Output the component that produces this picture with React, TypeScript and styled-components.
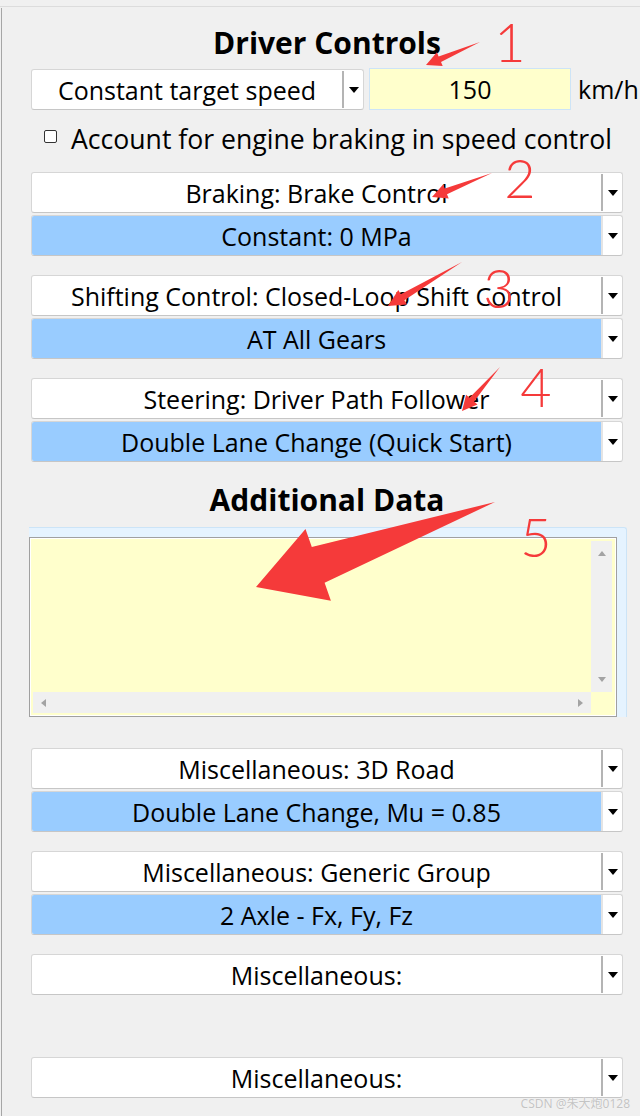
import styled, { createGlobalStyle } from 'styled-components';

const GlobalStyle = createGlobalStyle`
  html, body {
    margin: 0;
    padding: 0;
    background: #f0f0f0;
  }

  body {
    color: #000;
    font-family: "Open Sans", "Noto Sans", sans-serif;
  }
`;

const Page = styled.div`
  box-sizing: border-box;
  height: 1116px;
  overflow: hidden;
  padding-top: 6px;
  position: relative;
  width: 640px;
`;

const Frame = styled.div`
  border-top: 1px solid #dcdcdc;
  height: 100%;
`;

const Panel = styled.div`
  border-left: 1px solid #a6a6a6;
  box-sizing: border-box;
  height: 100%;
  margin: 1px 0 0 1px;
  padding: 18px 17px 0 29px;
`;

const Title = styled.div<{ $gap?: number }>`
  font-size: 30px;
  font-weight: 700;
  height: 34px;
  line-height: 34px;
  margin-top: ${({ $gap }) => $gap ?? 0}px;
  text-align: center;
  white-space: nowrap;
`;

const SpeedRow = styled.div`
  align-items: flex-end;
  display: flex;
  height: 42px;
  margin-top: 8px;
`;

const Combo = styled.div<{ $width?: number; $hidden?: boolean }>`
  background: #fff;
  border: 1px solid #d6d6d6;
  border-bottom-color: #c6c6c6;
  border-radius: 3px;
  box-sizing: border-box;
  display: flex;
  flex: none;
  height: 41px;
  overflow: hidden;
  visibility: ${({ $hidden }) => ($hidden ? 'hidden' : 'visible')};
  width: ${({ $width }) => ($width ? `${$width}px` : '100%')};
`;

const ComboValue = styled.div<{ $selected?: boolean }>`
  align-items: center;
  background: ${({ $selected }) => ($selected ? '#99ccff' : 'transparent')};
  border-right: 2px solid ${({ $selected }) => ($selected ? '#e4e4e4' : '#b4b4b4')};
  display: flex;
  flex: 1;
  font-size: 25px;
  justify-content: center;
  margin: ${({ $selected }) => ($selected ? '0' : '1px 0')};
  padding-top: 1px;
  white-space: nowrap;
`;

const ComboArrow = styled.div`
  align-items: center;
  display: flex;
  flex: none;
  justify-content: center;
  width: 19px;

  &::after {
    border-left: 5px solid transparent;
    border-right: 5px solid transparent;
    border-top: 6px solid #000;
    content: '';
    margin-left: 1px;
  }
`;

const NumberInput = styled.div`
  align-items: center;
  background: #ffffcc;
  border: 1px solid #cde4f7;
  box-sizing: border-box;
  display: flex;
  flex: none;
  font-size: 25px;
  height: 42px;
  justify-content: center;
  margin-left: 5px;
  width: 202px;
`;

const Unit = styled.span`
  align-self: center;
  flex: none;
  font-size: 25px;
  margin-left: 7px;
  white-space: nowrap;
`;

const CheckRow = styled.label`
  align-items: center;
  display: flex;
  font-size: 26.6px;
  height: 30px;
  margin-top: 14px;
  white-space: nowrap;
`;

const CheckBox = styled.span`
  background: #fff;
  border: 1px solid #333;
  border-radius: 2px;
  box-sizing: border-box;
  flex: none;
  height: 13px;
  margin: 0 14px 5px 13px;
  width: 13px;
`;

const GroupList = styled.div<{ $gap: number }>`
  display: flex;
  flex-direction: column;
  gap: 19px;
  margin-top: ${({ $gap }) => $gap}px;
`;

const Group = styled.div`
  display: flex;
  flex-direction: column;
  gap: 2px;
`;

const DataFrame = styled.div`
  background: #e5f3ff;
  border: 1px solid #cce4f7;
  border-bottom: none;
  border-left: none;
  border-radius: 0 3px 0 0;
  box-sizing: border-box;
  height: 190px;
  margin: 10px 0 0 -2px;
  padding: 9px 9px 0 0;
  width: 598px;
`;

const DataBox = styled.div`
  background: #ffffcc;
  border: 1px solid #a0a0a0;
  box-shadow: inset 0 0 0 1px #fff;
  box-sizing: border-box;
  display: grid;
  grid-template-columns: 1fr 21px;
  grid-template-rows: 1fr 21px;
  height: 100%;
  padding: 3px 4px 3px 3px;
`;

const ScrollBar = styled.div<{ $vertical?: boolean }>`
  align-items: center;
  background: #f0f0f0;
  display: flex;
  flex-direction: ${({ $vertical }) => ($vertical ? 'column' : 'row')};
  justify-content: space-between;
  padding: ${({ $vertical }) => ($vertical ? '10px 0' : '0 8px')};
`;

const ScrollArrow = styled.span<{ $dir: 'up' | 'down' | 'left' | 'right' }>`
  height: 0;
  width: 0;
  ${({ $dir }) => {
    const color = '#a3a3a3';
    if ($dir === 'up') return `border-left: 4px solid transparent; border-right: 4px solid transparent; border-bottom: 5px solid ${color};`;
    if ($dir === 'down') return `border-left: 4px solid transparent; border-right: 4px solid transparent; border-top: 5px solid ${color};`;
    if ($dir === 'left') return `border-top: 4px solid transparent; border-bottom: 4px solid transparent; border-right: 5px solid ${color};`;
    return `border-top: 4px solid transparent; border-bottom: 4px solid transparent; border-left: 5px solid ${color};`;
  }}
`;

const Annotations = styled.svg`
  height: 1116px;
  left: 0;
  pointer-events: none;
  position: absolute;
  top: 0;
  width: 640px;

  polygon {
    fill: #f53a3a;
  }

  text {
    fill: #f53a3a;
    font-family: Lato, "Noto Sans", sans-serif;
    font-size: 54px;
    font-weight: 300;
  }
`;

const Watermark = styled.span`
  bottom: 4px;
  color: #c4c4c4;
  font-family: "Noto Sans", "Noto Sans CJK SC", sans-serif;
  font-size: 12px;
  position: absolute;
  right: 10px;
  text-shadow: 0 0 1px #fff;
`;

type Pt = [number, number];

// tapered annotation arrow: pointed tail, straight-based triangular head
const arrowPoints = (tail: Pt, tip: Pt, headLen: number, headHalf: number, shaftHalf: number) => {
  const len = Math.hypot(tip[0] - tail[0], tip[1] - tail[1]);
  const ux = (tip[0] - tail[0]) / len;
  const uy = (tip[1] - tail[1]) / len;
  const nx = -uy;
  const ny = ux;
  const base: Pt = [tip[0] - ux * headLen, tip[1] - uy * headLen];
  const pts: Pt[] = [
    tail,
    [base[0] + nx * shaftHalf, base[1] + ny * shaftHalf],
    [base[0] + nx * headHalf, base[1] + ny * headHalf],
    tip,
    [base[0] - nx * headHalf, base[1] - ny * headHalf],
    [base[0] - nx * shaftHalf, base[1] - ny * shaftHalf],
  ];
  return pts.map((p) => p.map((v) => v.toFixed(1)).join(',')).join(' ');
};

const marks = [
  { n: '1', tail: [480, 42] as Pt, tip: [426, 65] as Pt, head: 15, half: 7.5, shaft: 3, x: 510, y: 62 },
  { n: '2', tail: [492, 173] as Pt, tip: [432, 197] as Pt, head: 15, half: 7.5, shaft: 3, x: 520, y: 198 },
  { n: '3', tail: [462, 262] as Pt, tip: [388, 306] as Pt, head: 17, half: 8.5, shaft: 3.5, x: 499, y: 308 },
  { n: '4', tail: [500, 367] as Pt, tip: [462, 411] as Pt, head: 15, half: 7.5, shaft: 3, x: 536, y: 407 },
  { n: '5', tail: [495, 502] as Pt, tip: [256, 587] as Pt, head: 66, half: 38, shaft: 19, x: 536, y: 557 },
];

type Pair = [string, string] | [string];

const upperGroups: Pair[] = [
  ['Braking: Brake Control', 'Constant: 0 MPa'],
  ['Shifting Control: Closed-Loop Shift Control', 'AT All Gears'],
  ['Steering: Driver Path Follower', 'Double Lane Change (Quick Start)'],
];

const lowerGroups: Pair[] = [
  ['Miscellaneous: 3D Road', 'Double Lane Change, Mu = 0.85'],
  ['Miscellaneous: Generic Group', '2 Axle - Fx, Fy, Fz'],
  ['Miscellaneous:'],
  ['Miscellaneous:'],
];

const Select = ({ label, selected, width }: { label: string; selected?: boolean; width?: number }) => (
  <Combo $width={width}>
    <ComboValue $selected={selected}>{label}</ComboValue>
    <ComboArrow />
  </Combo>
);

const Groups = ({ items, gap }: { items: Pair[]; gap: number }) => (
  <GroupList $gap={gap}>
    {items.map(([main, sub], i) => (
      <Group key={i}>
        <Select label={main} />
        {sub ? <Select label={sub} selected /> : <Combo $hidden />}
      </Group>
    ))}
  </GroupList>
);

export default function App() {
  return (
    <>
      <GlobalStyle />
      <Page>
        <Frame>
          <Panel>
            <Title>Driver Controls</Title>
            <SpeedRow>
              <Select label="Constant target speed" width={333} />
              <NumberInput>150</NumberInput>
              <Unit>km/h</Unit>
            </SpeedRow>
            <CheckRow>
              <CheckBox />
              Account for engine braking in speed control
            </CheckRow>

            <Groups items={upperGroups} gap={18} />

            <Title $gap={21}>Additional Data</Title>
            <DataFrame>
              <DataBox>
                <div />
                <ScrollBar $vertical>
                  <ScrollArrow $dir="up" />
                  <ScrollArrow $dir="down" />
                </ScrollBar>
                <ScrollBar>
                  <ScrollArrow $dir="left" />
                  <ScrollArrow $dir="right" />
                </ScrollBar>
                <div />
              </DataBox>
            </DataFrame>

            <Groups items={lowerGroups} gap={31} />
          </Panel>
        </Frame>

        <Annotations viewBox="0 0 640 1116">
          {marks.map((m) => (
            <g key={m.n}>
              <polygon points={arrowPoints(m.tail, m.tip, m.head, m.half, m.shaft)} />
              <text x={m.x} y={m.y} textAnchor="middle">
                {m.n}
              </text>
            </g>
          ))}
        </Annotations>
        <Watermark>CSDN @朱大炮0128</Watermark>
      </Page>
    </>
  );
}
